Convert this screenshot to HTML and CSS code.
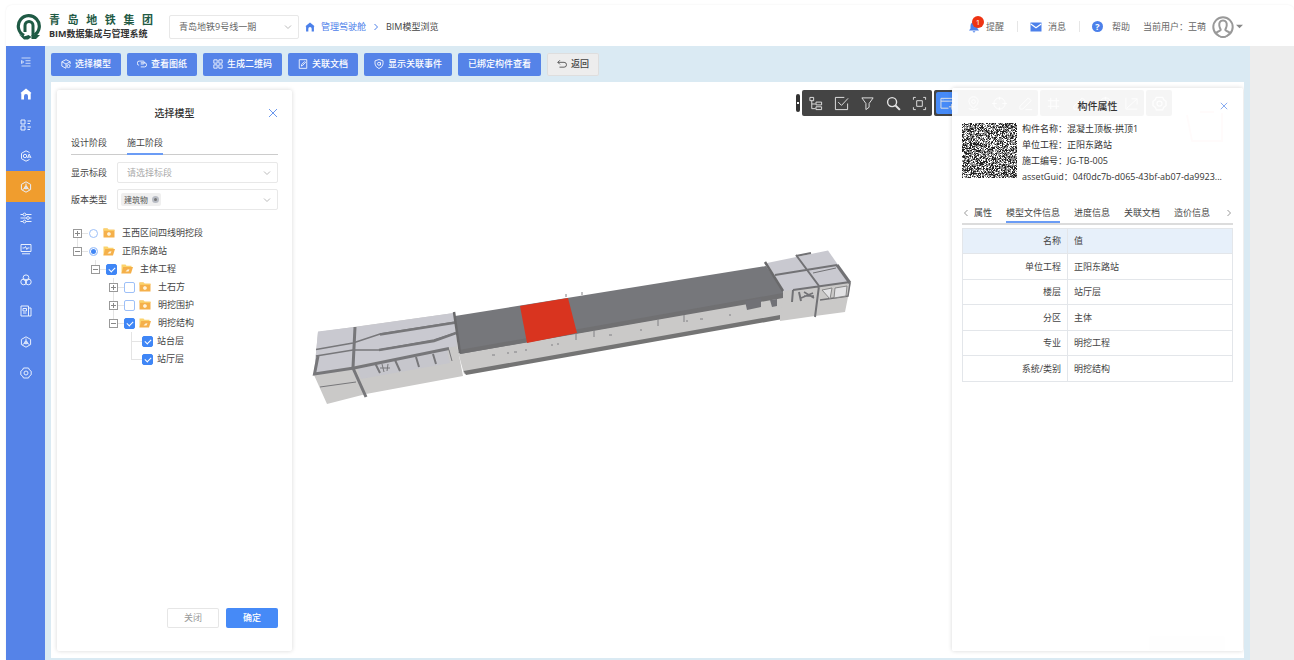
FILE: index.html
```html
<!DOCTYPE html>
<html lang="zh-CN">
<head>
  <meta charset="UTF-8" />
  <meta name="viewport" content="width=device-width, initial-scale=1.0" />
  <title>BIM模型浏览</title>
  <link rel="stylesheet" href="styles.css">
</head>
<body>
  <!-- icons -->
  <svg class="sprite" aria-hidden="true">
    <symbol id="i-down" viewBox="0 0 8 8"><path d="M1 2.5 4 5.5 7 2.5"/></symbol>
    <symbol id="i-right" viewBox="0 0 8 8"><path d="M2.5 1 5.5 4 2.5 7"/></symbol>
    <symbol id="i-left" viewBox="0 0 8 8"><path d="M5.5 1 2.5 4 5.5 7"/></symbol>
    <symbol id="i-close" viewBox="0 0 10 10"><path d="M1 1 9 9M9 1 1 9"/></symbol>
    <symbol id="i-home" viewBox="0 0 12 12"><path d="M6 0.5 11.5 5 10.700 5.500V11.500H8V8a2 2 0 0 0-4 0v3.500H1.300V5.500L.5 5Z" fill="currentColor" stroke="none"/></symbol>
    <symbol id="i-indent" viewBox="0 0 12 12"><path d="M1.500 2H10.500M5.500 4.700H10.500M5.500 7.300H10.500M1.500 10H10.500M1.500 4.500 3.800 6 1.500 7.500Z"/></symbol>
    <symbol id="i-list" viewBox="0 0 12 12"><path d="M1 1H5V5H1ZM1 7H5V11H1ZM7.500 2H11M7.500 4.500H10M7.500 8H11M7.500 10.500H10"/></symbol>
    <symbol id="i-oa" viewBox="0 0 12 12"><path d="M9.500 2.500 6 .8 1.500 3.300V8.700L6 11.200 9.500 9.500"/><circle cx="5" cy="6" r="1.700"/><path d="M7.500 8 9.200 4 11 8M8 7H10.500"/></symbol>
    <symbol id="i-cube" viewBox="0 0 12 12"><path d="M6 .8 10.600 3.400V8.600L6 11.200 1.400 8.600V3.400ZM6 2.500V6.500M6 6.500 2.500 8.500M6 6.500 9.500 8.500"/><path d="M6 5 7.300 5.800V7.200L6 8 4.700 7.200V5.800Z"/></symbol>
    <symbol id="i-sliders" viewBox="0 0 12 12"><path d="M.5 2.500H3M6 2.500H11.500M.5 6H6.500M9.500 6H11.500M.5 9.500H3M6 9.500H11.500"/><circle cx="4.500" cy="2.500" r="1.400"/><circle cx="8" cy="6" r="1.400"/><circle cx="4.500" cy="9.500" r="1.400"/></symbol>
    <symbol id="i-monitor" viewBox="0 0 12 12"><path d="M1 1.500H11V8.500H1ZM2.500 5H4.500L5.500 3.500 6.800 6.500 7.500 5H9.500M2 10.800H10"/></symbol>
    <symbol id="i-circles" viewBox="0 0 12 12"><circle cx="6" cy="3.800" r="2.900"/><circle cx="3.700" cy="7.900" r="2.900"/><circle cx="8.300" cy="7.900" r="2.900"/></symbol>
    <symbol id="i-news" viewBox="0 0 12 12"><path d="M1 1H8.500V11H1ZM8.500 3H11V11H8.500M3 3.500H6.500V6H3ZM3 8H6.500"/></symbol>
    <symbol id="i-gear" viewBox="0 0 12 12"><path d="M3.500 1H8.500L9.500 3 11.200 4.200V7.800L9.500 9 8.500 11H3.500L2.500 9 .8 7.800V4.200L2.500 3Z"/><circle cx="6" cy="6" r="2"/></symbol>
    <symbol id="i-box" viewBox="0 0 12 12"><path d="M6 .8 11 3.300V6M6 11.200 1 8.500V3.300L6 .8M1 3.300 6 6 11 3.300M6 6V11"/><circle cx="9" cy="8.500" r="1.800"/></symbol>
    <symbol id="i-clip" viewBox="0 0 12 12"><path d="M2.500 7.500A2.500 2.500 0 0 1 3 2.500H7.500A1.800 1.800 0 0 1 7.500 6H4.500M4.500 4.500H9A2.500 2.500 0 0 1 9 9.500H4.500"/></symbol>
    <symbol id="i-qr" viewBox="0 0 12 12"><path d="M1 1H5V5H1ZM7 1H11V5H7ZM1 7H5V11H1ZM7 7H11V11H7Z"/></symbol>
    <symbol id="i-edit" viewBox="0 0 12 12"><path d="M1.500 .8H10.500V11.200H1.500ZM4 8.500 4.500 6.500 8 3 9 4 5.500 7.800Z"/></symbol>
    <symbol id="i-shield" viewBox="0 0 12 12"><path d="M6 .6 10.800 2.200V6Q10.500 9.500 6 11.500 1.500 9.500 1.200 6V2.200Z"/><circle cx="6" cy="5.700" r="1.800"/><path d="M7.800 4V7.500"/></symbol>
    <symbol id="i-back" viewBox="0 0 12 12"><path d="M3.500 1.500 1 4 3.500 6.500M1 4H8.500A2.700 2.700 0 0 1 8.500 9.800H3"/></symbol>
    <symbol id="i-folder" viewBox="0 0 12 10"><path d="M.5 .5H4.500L5.500 1.700H11.500V9.500H.5Z" fill="#f5b04a"/><path d="M.5 .5H4.500L5.500 1.700H11.500V2.800H.5Z" fill="#fbd36c"/><path d="M5.900 4 7.700 5V6.900L5.900 7.900 4.200 6.900V5Z" fill="#fff3d9"/></symbol>
    <symbol id="i-folder-open" viewBox="0 0 12 10"><path d="M.5 9.500V.5H4.500L5.500 1.700H10.500V4Z" fill="#fbd36c"/><path d="M2.200 3H12L10 9.500H.5Z" fill="#f5b04a"/><path d="M4.500 7.500 6.500 5.500 8.500 5.200 7.500 7.500Z" fill="#fff3d9"/></symbol>
    <symbol id="i-tree" viewBox="0 0 16 16"><path d="M2 1.500H6V5H2ZM4 5V13.500H8M4 8.500H8M8.500 6.500H14.500V9.500H8.500ZM8.500 11.500H14.500V14.500H8.500Z"/></symbol>
    <symbol id="i-check" viewBox="0 0 16 16"><path d="M11 1.500H1.500V14.500H14.500V8M4.500 6.500 8 10 15 2.500"/></symbol>
    <symbol id="i-filter" viewBox="0 0 16 16"><path d="M2 2H14L9.700 8V12L6.300 14.500V8Z"/></symbol>
    <symbol id="i-search" viewBox="0 0 16 16"><circle cx="6.500" cy="6.500" r="4.800" stroke-width="1.500"/><path d="M10 10 14.800 14.800" stroke-width="2.200"/></symbol>
    <symbol id="i-focus" viewBox="0 0 16 16"><path d="M4 1.500H1.500V4M12 1.500H14.500V4M1.500 12V14.500H4M14.500 12V14.500H12M5 5H11V11H5Z"/></symbol>
    <symbol id="i-window" viewBox="0 0 16 16"><path d="M9 13H1V2.500H15V8M1 5.500H15M3 4H3.500M12.500 8.500V14.500M9.500 11.500H15.500"/></symbol>
    <symbol id="i-pin" viewBox="0 0 16 16"><path d="M8 13Q3 8.500 3 5.800A5 5 0 0 1 13 5.800Q13 8.500 8 13Z"/><circle cx="8" cy="6" r="2"/><path d="M3 13.500Q8 16 13 13.500"/></symbol>
    <symbol id="i-target" viewBox="0 0 16 16"><circle cx="8" cy="8" r="6"/><path d="M0 8H5M11 8H16M8 1V4M8 12V15"/></symbol>
    <symbol id="i-pen" viewBox="0 0 16 16"><path d="M2 11 11 2 14 5 5 14H2ZM8 14.500H15"/></symbol>
    <symbol id="i-grid" viewBox="0 0 16 16"><path d="M5 2V14M11 2V14M2 5H14M2 11H14"/></symbol>
    <symbol id="i-chart" viewBox="0 0 16 16"><path d="M2 2V14H14M3 13 14 3M8 3H14V9"/></symbol>
  </svg>

  <div class="app">
    <header class="header">
      <div class="brand">
        <svg class="logo" viewBox="0 0 26 26">
          <path d="M8 21.500A10.500 10.500 0 1 1 18.500 21" fill="none" stroke="#1f5a45" stroke-width="3.200"/>
          <path d="M9 18V11.500a4 4 0 0 1 8 0V22" fill="none" stroke="#1f5a45" stroke-width="3"/>
          <path d="M3 20.500Q8 23.500 12.500 21L15.500 23 12 25.500H8Z M15.500 21H24L20 25H15.500Z" fill="#1f5a45"/>
        </svg>
        <div class="brand-text">
          <div class="brand-group">青 岛 地 铁 集 团</div>
          <div class="brand-system">BIM数据集成与管理系统</div>
        </div>
      </div>
      <div class="select select-line">
        <select aria-label="线路"><option>青岛地铁9号线一期</option></select>
        <svg class="chevron"><use href="#i-down"/></svg>
      </div>
      <nav class="breadcrumb">
        <svg class="icon"><use href="#i-home"/></svg>
        <a href="#">管理驾驶舱</a>
        <svg class="icon sep"><use href="#i-right"/></svg>
        <span>BIM模型浏览</span>
      </nav>
      <div class="user-bar">
        <a href="#" class="user-link">
          <span class="bell">
            <svg class="icon" viewBox="0 0 12 12"><path d="M6 1Q9.500 1.500 9.500 5V7.500L11 9.500H1L2.500 7.500V5Q2.500 1.500 6 1ZM4.500 10.200H7.500L6 11.800Z" fill="#4c80ea"/></svg>
            <span class="badge">1</span>
          </span>
          提醒
        </a>
        <a href="#" class="user-link">
          <svg class="icon" viewBox="0 0 12 12"><path d="M.5 1.500H11.500V10.500H.5Z" fill="#4c80ea"/><path d="M.8 3 6 6.800 11.200 3" fill="none" stroke="#fff" stroke-width="1.200"/></svg>
          消息
        </a>
        <a href="#" class="user-link"><span class="help-mark">?</span>帮助</a>
        <button class="user">
          当前用户：王萌
          <svg class="avatar" viewBox="0 0 22 22"><circle cx="11" cy="11" r="9.700" fill="#fff" stroke="#999" stroke-width="2"/><path d="M11 4.500C14 4.500 15 6.800 14.700 9.500 14.500 12 13.300 12.700 13.300 14 14.500 15.500 17 15.500 18 17Q15 21 11 21T4 17C5 15.500 7.500 15.500 8.700 14 8.700 12.700 7.500 12 7.300 9.500 7 6.800 8 4.500 11 4.500Z" fill="#fff" stroke="#999" stroke-width="2"/></svg>
          <svg class="caret" viewBox="0 0 8 5"><path d="M0 .5H8L4 4.500Z" fill="#888"/></svg>
        </button>
      </div>
    </header>

    <div class="body">
      <nav class="sidebar">
        <a href="#" class="fold" aria-label="收起"><svg><use href="#i-indent"/></svg></a>
        <a href="#" aria-label="首页"><svg class="solid"><use href="#i-home"/></svg></a>
        <a href="#" aria-label="列表"><svg><use href="#i-list"/></svg></a>
        <a href="#" aria-label="办公"><svg><use href="#i-oa"/></svg></a>
        <a href="#" aria-label="模型" class="active"><svg><use href="#i-cube"/></svg></a>
        <a href="#" aria-label="参数"><svg><use href="#i-sliders"/></svg></a>
        <a href="#" aria-label="监控"><svg><use href="#i-monitor"/></svg></a>
        <a href="#" aria-label="协同"><svg><use href="#i-circles"/></svg></a>
        <a href="#" aria-label="资料"><svg><use href="#i-news"/></svg></a>
        <a href="#" aria-label="构件"><svg><use href="#i-cube"/></svg></a>
        <a href="#" aria-label="设置"><svg><use href="#i-gear"/></svg></a>
      </nav>

      <main class="main">
        <div class="toolbar">
          <button class="btn"><svg><use href="#i-box"/></svg>选择模型</button>
          <button class="btn"><svg><use href="#i-clip"/></svg>查看图纸</button>
          <button class="btn"><svg><use href="#i-qr"/></svg>生成二维码</button>
          <button class="btn"><svg><use href="#i-edit"/></svg>关联文档</button>
          <button class="btn"><svg><use href="#i-shield"/></svg>显示关联事件</button>
          <button class="btn">已绑定构件查看</button>
          <button class="btn btn-back"><svg><use href="#i-back"/></svg>返回</button>
        </div>

        <div class="viewer">
          <svg class="scene" viewBox="51 82 1193 576" preserveAspectRatio="xMidYMin slice">
            <!-- west end -->
            <path d="M318 332 454 313 458 350 463 376 366 394 327 404 314 375Z" fill="#cac9c8"/>
            <path d="M318 331.500 355 327 454 313 457 346 355 366 314 374Z" fill="#c9c9d0"/>
            <path d="M357 367 447 349 450 363 361 379Z" fill="#c6c6cc"/>
            <g fill="none" stroke="#77777a" stroke-width="1.500">
              <path d="M316 349.500 353 343 380 334 456 322"/>
              <path d="M316 356 353 350 379 350 434 340 456 333"/>
              <path d="M380 334.500 456 322.500M379 350 434 341 456 333" stroke-width="2.500"/>
              <path d="M318 356 314.500 374 354 368 449 348.500" stroke-width="3"/>
              <path d="M355 327 353 368 366 397" stroke-width="3"/>
              <path d="M375 363 380 373M395 360 400 371M416 357 419 367M433 354 436 364" stroke-width="2"/>
              <path d="M382 364 384 372M388 364 387 371M380 368H390M449 350 452 361" stroke-width="1"/>
              <path d="M320 387 356 382" stroke-width="1"/>
            </g>
            <!-- east end -->
            <path d="M780 288 819 284 851 282 845 312 815 316 780 321Z" fill="#cac9c8"/>
            <path d="M767 263 828 250.500 850 282 784 291Z" fill="#c9c9d0"/>
            <g fill="none" stroke="#727275" stroke-width="2">
              <path d="M796 255 819 286 815 317M775 275 837 265M796 256 811 253M793 290 850 282"/>
              <path d="M837 265 850 283" stroke-width="3"/>
              <path d="M813 273 836 268" stroke-width="1"/>
              <path d="M793 290 792 302M799 292 801 301" />
              <path d="M804 292 814 298M801 298 813 293M804 296H814M820 300 848 296 850 283" stroke-width="1.500"/>
            </g>
            <path d="M822 290 832 288 830 299ZM835 288 847 286 846 296 834 298Z" fill="#e2e2e4" stroke="#888" stroke-width="1"/>
            <!-- main hall -->
            <path d="M458 352 783 295 781 318 464 374Z" fill="#cac9c8"/>
            <path d="M463.500 371 780 315V319.500L466 375Z" fill="#747474"/>
            <path d="M455 316 766 266 783 290V297L460 354Z" fill="#76777b"/>
            <path d="M459 350 783 293V298L460 354Z" fill="#707072"/>
            <path d="M520 306 568 298 577 333 527 343Z" fill="#d9341f"/>
            <path d="M454 312 460 353M765 262 783 291" fill="none" stroke="#69696b" stroke-width="2.500"/>
            <g fill="none" stroke="#808084" stroke-width="1">
              <path d="M576 333V340M594 330V337M658 319V326M684 315V322M566 297V294M582 295V292"/>
              <path d="M492 355H495M507 353H509M514 352H517M525 350H527M551 345H553M557 344H559M609 335H612M640 330H642M686 321H688M700 319H703M729 315H731"/>
            </g>
            <path d="M745 301 761 298V307L747 310ZM770 300 777 299V306L772 307Z" fill="#717176"/>
            <!-- view cube -->
            <path d="M1187 115 1192 141H1222V113M1200 112H1214" fill="none" stroke="#f0b4b4" stroke-width="2"/>
            <rect x="1149" y="636" width="76" height="15" rx="3" fill="#e0e0e0" stroke="none"/>
          </svg>

          <div class="view-tools">
            <button class="knob" aria-label="收起工具栏"></button>
            <div class="tool-group">
              <button aria-label="结构树"><svg><use href="#i-tree"/></svg></button>
              <button aria-label="选择"><svg><use href="#i-check"/></svg></button>
              <button aria-label="过滤"><svg><use href="#i-filter"/></svg></button>
              <button aria-label="搜索"><svg><use href="#i-search"/></svg></button>
              <button aria-label="聚焦"><svg><use href="#i-focus"/></svg></button>
            </div>
            <div class="tool-group">
              <button aria-label="属性窗口" class="on"><svg><use href="#i-window"/></svg></button>
              <button aria-label="定位"><svg><use href="#i-pin"/></svg></button>
              <button aria-label="中心"><svg><use href="#i-target"/></svg></button>
              <button aria-label="标注"><svg><use href="#i-pen"/></svg></button>
            </div>
            <div class="tool-group">
              <button aria-label="轴网"><svg><use href="#i-grid"/></svg></button>
              <button aria-label="剖切"><svg><use href="#i-pen"/></svg></button>
              <button aria-label="漫游"><svg><use href="#i-target"/></svg></button>
              <button aria-label="测量"><svg><use href="#i-chart"/></svg></button>
            </div>
            <div class="tool-group">
              <button aria-label="设置"><svg><use href="#i-gear"/></svg></button>
            </div>
          </div>

          <section class="panel model-panel">
            <div class="panel-head">
              <h2>选择模型</h2>
              <button class="close" aria-label="关闭面板"><svg><use href="#i-close"/></svg></button>
            </div>
            <div class="tabs stage-tabs">
              <button>设计阶段</button>
              <button class="active">施工阶段</button>
            </div>
            <div class="field">
              <label for="section">显示标段</label>
              <div class="select">
                <select id="section" class="placeholder"><option>请选择标段</option></select>
                <svg class="chevron"><use href="#i-down"/></svg>
              </div>
            </div>
            <div class="field">
              <label for="version">版本类型</label>
              <div class="select">
                <select id="version"><option></option></select>
                <span class="tag">建筑物<i></i></span>
                <svg class="chevron"><use href="#i-down"/></svg>
              </div>
            </div>

            <ul class="tree">
              <li>
                <div class="node"><button class="expander plus" aria-label="展开"></button><label><input type="radio" name="unit"><svg><use href="#i-folder"/></svg>玉西区间四线明挖段</label></div>
              </li>
              <li>
                <div class="node"><button class="expander" aria-label="收起"></button><label><input type="radio" name="unit" checked><svg><use href="#i-folder-open"/></svg>正阳东路站</label></div>
                <ul>
                  <li>
                    <div class="node"><button class="expander" aria-label="收起"></button><label><input type="checkbox" checked><svg><use href="#i-folder-open"/></svg>主体工程</label></div>
                    <ul>
                      <li><div class="node"><button class="expander plus" aria-label="展开"></button><label><input type="checkbox"><svg><use href="#i-folder"/></svg>土石方</label></div></li>
                      <li><div class="node"><button class="expander plus" aria-label="展开"></button><label><input type="checkbox"><svg><use href="#i-folder"/></svg>明挖围护</label></div></li>
                      <li>
                        <div class="node"><button class="expander" aria-label="收起"></button><label><input type="checkbox" checked><svg><use href="#i-folder-open"/></svg>明挖结构</label></div>
                        <ul>
                          <li><div class="node leaf"><label><input type="checkbox" checked>站台层</label></div></li>
                          <li><div class="node leaf"><label><input type="checkbox" checked>站厅层</label></div></li>
                        </ul>
                      </li>
                    </ul>
                  </li>
                </ul>
              </li>
            </ul>

            <div class="panel-foot">
              <button class="cancel">关闭</button>
              <button class="ok">确定</button>
            </div>
          </section>

          <section class="panel prop-panel">
            <div class="panel-head">
              <h2>构件属性</h2>
              <button class="close" aria-label="关闭属性"><svg><use href="#i-close"/></svg></button>
            </div>
            <div class="info">
              <svg class="qrcode" id="qrcode" viewBox="0 0 55 55"></svg>
              <ul>
                <li>构件名称：混凝土顶板-拱顶1</li>
                <li>单位工程：正阳东路站</li>
                <li>施工编号：JG-TB-005</li>
                <li>assetGuid：04f0dc7b-d065-43bf-ab07-da9923...</li>
              </ul>
            </div>
            <div class="tabs prop-tabs">
              <button class="arrow" aria-label="上一页"><svg><use href="#i-left"/></svg></button>
              <button>属性</button>
              <button class="active">模型文件信息</button>
              <button>进度信息</button>
              <button>关联文档</button>
              <button>造价信息</button>
              <button class="arrow next" aria-label="下一页"><svg><use href="#i-right"/></svg></button>
            </div>
            <table class="props">
              <tr><th>名称</th><th>值</th></tr>
              <tr><td>单位工程</td><td>正阳东路站</td></tr>
              <tr><td>楼层</td><td>站厅层</td></tr>
              <tr><td>分区</td><td>主体</td></tr>
              <tr><td>专业</td><td>明挖工程</td></tr>
              <tr><td>系统/类别</td><td>明挖结构</td></tr>
            </table>
          </section>
        </div>
      </main>
    </div>
  </div>

  <script src="script.js"></script>
</body>
</html>
```

FILE: styles.css
```css
* {
  box-sizing: border-box;
}

body {
  margin: 0;
  background: #fff;
  color: #444;
  font: 9px/18px "Open Sans", "Noto Sans CJK SC", sans-serif;
}

button, select, input {
  font: inherit;
  color: inherit;
  margin: 0;
}

button {
  padding: 0;
  border: none;
  background: none;
  cursor: pointer;
  white-space: nowrap;
}

a {
  color: inherit;
  text-decoration: none;
}

ul {
  list-style: none;
  margin: 0;
  padding: 0;
}

svg {
  fill: none;
  stroke: currentColor;
  flex: none;
}

svg path[fill]:not([stroke]) {
  stroke: none;
}

.sprite {
  display: none;
}

.app {
  display: flex;
  flex-direction: column;
  min-height: calc(100vh - 5px);
  margin: 5px 0 0 6px;
  border-radius: 6px 6px 0 0;
  box-shadow: 0 0 2px rgba(0, 0, 0, 0.08);
}

/* header */
.header {
  display: flex;
  align-items: center;
  height: 41px;
  padding: 2px 51px 0 10px;
}

.brand {
  display: flex;
  align-items: center;
  gap: 7px;
}

.logo {
  width: 26px;
  height: 26px;
}

.brand-text {
  width: 104px;
  line-height: 14px;
  font-weight: bold;
  white-space: nowrap;
}

.brand-group {
  color: #1f5a45;
  font-size: 11px;
  text-align-last: justify;
}

.brand-system {
  color: #333;
}

.select {
  position: relative;
  flex: 1;
}

.select select {
  display: block;
  width: 100%;
  height: 21px;
  padding: 0 9px;
  border: 1px solid #e8e8e8;
  border-radius: 2px;
  background: #fff;
  appearance: none;
}

.select .placeholder {
  color: #aaa;
}

.chevron {
  position: absolute;
  right: 7px;
  top: 50%;
  width: 8px;
  height: 8px;
  margin-top: -4px;
  color: #bbb;
  pointer-events: none;
}

.select-line {
  flex: none;
  width: 130px;
  margin-left: 16px;
}

.select-line select {
  height: 24px;
  color: #666;
}

.breadcrumb {
  display: flex;
  align-items: center;
  gap: 6px;
  margin-left: 6px;
}

.breadcrumb .icon {
  width: 10px;
  height: 10px;
  color: #4c80ea;
}

.breadcrumb .sep {
  width: 8px;
  height: 8px;
}

.breadcrumb a {
  color: #4c80ea;
}

.user-bar {
  display: flex;
  align-items: center;
  margin-left: auto;
  color: #666;
}

.user-link {
  position: relative;
  display: flex;
  align-items: center;
  gap: 6px;
  margin-right: 13px;
}

.user-link + .user-link {
  padding-left: 13px;
}

.user-link + .user-link::before {
  content: "";
  position: absolute;
  left: 0;
  width: 1px;
  height: 11px;
  background: #e6e6e6;
}

.user-link .icon {
  width: 12px;
  height: 12px;
}

.bell {
  position: relative;
  display: flex;
}

.badge {
  position: absolute;
  left: 4px;
  top: -5px;
  width: 12px;
  height: 12px;
  border-radius: 50%;
  background: #ee3312;
  color: #fff;
  font-size: 8px;
  line-height: 12px;
  text-align: center;
}

.help-mark {
  width: 11px;
  height: 11px;
  margin: 0 3px 0 0;
  border-radius: 50%;
  background: #4c80ea;
  color: #fff;
  font-weight: bold;
  line-height: 11px;
  text-align: center;
}

.user {
  display: flex;
  align-items: center;
}

.avatar {
  width: 22px;
  height: 22px;
  margin: 0 2px 0 6px;
}

.caret {
  width: 7px;
  height: 5px;
}

/* layout */
.body {
  flex: 1;
  display: flex;
  padding-right: 44px;
  background: #ededed;
}

.sidebar {
  width: 39px;
  background: #5583e8;
  color: #e8effd;
}

.sidebar a {
  display: flex;
  align-items: center;
  justify-content: center;
  height: 31px;
}

.sidebar .fold {
  height: 32px;
  opacity: 0.8;
}

.sidebar .active {
  background: #f09d2e;
}

.sidebar svg {
  width: 12px;
  height: 12px;
}

.sidebar .solid {
  color: #fff;
}

.main {
  flex: 1;
  display: flex;
  flex-direction: column;
  min-width: 0;
  padding: 0 6px 2px;
  background: #daeaf3;
}

.toolbar {
  display: flex;
  align-items: center;
  gap: 6px;
  height: 36px;
}

.btn {
  display: flex;
  align-items: center;
  gap: 4px;
  height: 23px;
  padding: 0 10px;
  border-radius: 2px;
  background: #5583e8;
  color: #fff;
  font-weight: 500;
}

.btn svg {
  width: 10px;
  height: 10px;
}

.btn-back {
  background: #ededed;
  color: #444;
  box-shadow: inset 0 0 0 1px #dedede;
}

.viewer {
  position: relative;
  flex: 1;
  min-height: 500px;
  overflow: hidden;
  background: #fff;
}

.scene {
  position: absolute;
  width: 100%;
  height: 100%;
}

/* 3d toolbar */
.view-tools {
  position: absolute;
  top: 8px;
  right: 72px;
  display: flex;
  align-items: center;
  gap: 2px;
}

.knob {
  width: 4px;
  height: 18px;
  border-radius: 2px;
  background: linear-gradient(#fff, #fff) center / 2px 2px no-repeat #333;
}

.tool-group {
  display: flex;
  border-radius: 2px;
  background: #444;
  color: #e4e4e4;
}

.tool-group button {
  display: flex;
  align-items: center;
  justify-content: center;
  width: 26px;
  height: 26px;
}

.tool-group .on {
  border: 2px solid #444;
  border-radius: 4px;
  background: #468af7;
}

.tool-group svg {
  width: 15px;
  height: 15px;
}

/* floating panels */
.panel {
  position: absolute;
  display: flex;
  flex-direction: column;
  bottom: 7px;
  border-radius: 2px;
  background: #fff;
  box-shadow: 0 0 4px rgba(0, 0, 0, 0.16);
}

.panel-head {
  position: relative;
}

.panel-head h2 {
  margin: 0;
  color: #333;
  font-size: 10px;
  font-weight: 500;
  text-align: center;
}

.close {
  position: absolute;
  right: 0;
  top: 4px;
  display: flex;
  color: #6a97ee;
}

.close svg {
  width: 10px;
  height: 10px;
}

.tabs {
  display: flex;
  border-bottom: 2px solid #dcdcdc;
}

.tabs button {
  margin-bottom: -2px;
  border-bottom: 2px solid transparent;
}

.tabs .active {
  border-color: #6b9cf5;
}

.model-panel {
  left: 6px;
  top: 8px;
  width: 235px;
  padding: 14px 14px 23px;
}

.stage-tabs {
  gap: 20px;
  margin: 11px 0 7px;
  border-bottom: 1px solid #ccc;
}

.stage-tabs button {
  height: 22px;
  margin-bottom: -1px;
}

.field {
  display: flex;
  align-items: center;
  gap: 10px;
  margin-bottom: 6px;
}

.tag {
  position: absolute;
  left: 4px;
  top: 4px;
  display: flex;
  align-items: center;
  gap: 4px;
  height: 13px;
  padding: 0 2px 0 3px;
  border-radius: 2px;
  background: #efefef;
  color: #555;
  font-size: 8px;
}

.tag i {
  width: 7px;
  height: 7px;
  border: 2px solid #b8bcc4;
  border-radius: 50%;
  background: #777;
}

/* tree */
.tree {
  margin: 8px 0 0 2px;
}

.tree ul {
  padding-left: 18px;
}

.tree li {
  position: relative;
}

.tree li::before,
.tree li::after {
  content: "";
  position: absolute;
  left: 4px;
}

.tree li::before {
  top: 0;
  height: 100%;
  border-left: 1px solid #e4e4e4;
}

.tree > li:first-child::before {
  top: 9px;
}

.tree li:last-child::before {
  height: 9px;
}

.tree li::after {
  top: 9px;
  width: 11px;
  border-top: 1px solid #e4e4e4;
}

.node {
  position: relative;
  z-index: 1;
  display: flex;
  align-items: center;
  gap: 6px;
  height: 18px;
}

.leaf {
  padding-left: 15px;
}

.node label {
  display: flex;
  align-items: center;
  gap: 4px;
}

.node label svg {
  width: 12px;
  height: 10px;
  margin-right: 3px;
}

.expander {
  width: 9px;
  height: 9px;
  border: 1px solid #999;
  background: linear-gradient(#888, #888) center / 5px 1px no-repeat #fff;
}

.expander.plus {
  background: linear-gradient(#888, #888) center / 5px 1px no-repeat,
    linear-gradient(#888, #888) center / 1px 5px no-repeat #fff;
}

.node input {
  position: relative;
  width: 11px;
  height: 11px;
  border: 1px solid #9dc0f8;
  border-radius: 2px;
  background: #fff;
  appearance: none;
}

.node input:checked {
  border-color: #3f86f6;
  background: #3f86f6;
}

.node input[type="checkbox"]:checked::after {
  content: "";
  position: absolute;
  left: 3px;
  top: 1px;
  width: 3px;
  height: 5px;
  border: solid #fff;
  border-width: 0 1px 1px 0;
  transform: rotate(45deg);
}

.node input[type="radio"] {
  width: 9px;
  height: 9px;
  margin: 0 1px;
  border-radius: 50%;
}

.node input[type="radio"]:checked {
  border: 1px solid #b5cffa;
  box-shadow: inset 0 0 0 1px #fff;
}

.panel-foot {
  display: flex;
  justify-content: flex-end;
  gap: 7px;
  margin-top: auto;
}

.panel-foot button {
  width: 52px;
  height: 20px;
  border-radius: 2px;
}

.cancel {
  box-shadow: inset 0 0 0 1px #e6e6e6;
  color: #999;
}

.ok {
  background: #468af7;
  color: #fff;
  font-weight: 500;
}

/* property panel */
.prop-panel {
  right: 1px;
  top: 6px;
  width: 291px;
  padding: 9px 10px;
  background: rgba(255, 255, 255, 0.95);
}

.prop-panel .close {
  right: 5px;
  top: 5px;
}

.prop-panel .close svg {
  width: 8px;
  height: 8px;
}

.info {
  display: flex;
  gap: 5px;
  margin: 6px 0 19px;
  color: #333;
  line-height: 16px;
}

.info ul {
  min-width: 0;
}

.info li {
  overflow: hidden;
  white-space: nowrap;
}

.qrcode {
  width: 55px;
  height: 55px;
  margin-top: 2px;
  color: #222;
}

.prop-tabs {
  gap: 14px;
}

.prop-tabs button {
  height: 19px;
}

.prop-tabs .arrow {
  display: flex;
  align-items: center;
  width: 12px;
  margin-right: -14px;
  color: #999;
}

.prop-tabs .next {
  width: 8px;
  margin: 0 0 0 auto;
}

.arrow svg {
  width: 8px;
  height: 8px;
}

.props {
  width: 100%;
  margin-top: 3px;
  border-collapse: collapse;
  table-layout: fixed;
}

.props tr {
  height: 25px;
}

.props tr:nth-child(even) {
  height: 26px;
}

.props th,
.props td {
  padding: 0 6px;
  border: 1px solid #e3e6ea;
  font-weight: normal;
  text-align: left;
}

.props th {
  background: #e7f0fa;
}

.props th:first-child,
.props td:first-child {
  width: 105px;
  text-align: right;
}
```

FILE: script.js
```javascript
// fills the component code square
const qrcode = document.getElementById("qrcode");
const size = 55;
let seed = 905;

function next() {
  seed = (seed * 16807) % 2147483647;
  return seed / 2147483647;
}

function addModules(d, opacity) {
  const path = document.createElementNS("http://www.w3.org/2000/svg", "path");
  path.setAttribute("d", d);
  path.setAttribute("fill", "currentColor");
  path.setAttribute("fill-opacity", opacity);
  qrcode.appendChild(path);
}

let dark = "";
let light = "";
for (let y = 0; y < size; y++) {
  for (let x = 0; x < size; x++) {
    const n = next();
    if (n > 0.65) dark += `M${x} ${y}h1v1h-1z`;
    else if (n > 0.25) light += `M${x} ${y}h1v1h-1z`;
  }
}
addModules(dark, 1);
addModules(light, 0.5);
```
